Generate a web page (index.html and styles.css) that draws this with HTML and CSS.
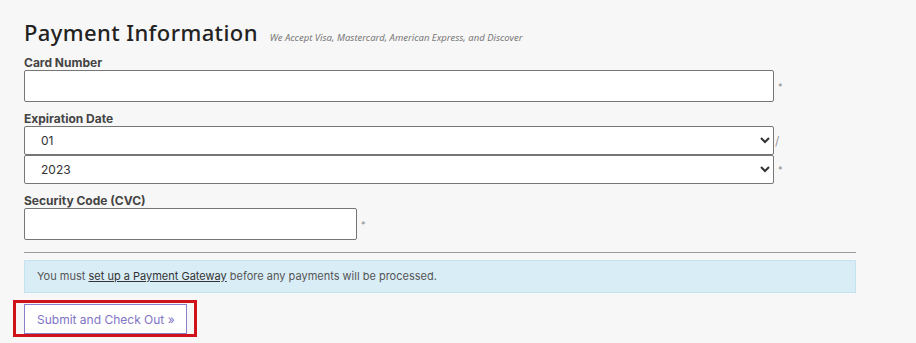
FILE: index.html
```html
<!DOCTYPE html>
<html lang="en">
<head>
    <meta charset="UTF-8">
    <title>Payment Information</title>
    <link rel="stylesheet" href="styles.css">
</head>
<body>
    <div class="checkout">
        <div class="title-row">
            <h2>Payment Information</h2>
            <span class="accepts">We Accept Visa, Mastercard, American Express, and Discover</span>
        </div>

        <div class="field">
            <label for="card-number">Card Number</label>
            <div class="row">
                <input type="text" id="card-number" class="input-wide">
                <span class="req">*</span>
            </div>
        </div>

        <div class="field">
            <label for="exp-month">Expiration Date</label>
            <div class="row">
                <select id="exp-month" class="select-wide">
                    <option>01</option>
                </select>
                <span class="slash">/</span>
            </div>
            <div class="row">
                <select id="exp-year" class="select-wide">
                    <option>2023</option>
                </select>
                <span class="req">*</span>
            </div>
        </div>

        <div class="field">
            <label for="cvc">Security Code (CVC)</label>
            <div class="row">
                <input type="text" id="cvc" class="input-short">
                <span class="req">*</span>
            </div>
        </div>

        <hr class="divider">

        <div class="alert">You must <a href="#">set up a Payment Gateway</a> before any payments will be processed.</div>

        <div class="submit-wrap">
            <button class="btn-submit">Submit and Check Out &raquo;</button>
        </div>
    </div>
</body>
</html>
```

FILE: styles.css
```css
body {
    margin: 0;
    background-color: #f7f7f7;
    font-family: Inter, "Liberation Sans", sans-serif;
    color: #333;
}
.checkout {
    width: 832px;
    padding: 18px 0 0 24px;
}
.title-row {
    display: flex;
    align-items: baseline;
    gap: 12px;
}
.title-row h2 {
    margin: 0;
    font-family: "Noto Sans", sans-serif;
    font-weight: 500;
    font-size: 22px;
    line-height: 28px;
    color: #222;
    letter-spacing: 0.4px;
}
.accepts {
    font-family: "Noto Sans", sans-serif;
    font-style: italic;
    font-size: 9.5px;
    color: #777;
}
.field {
    margin-top: 10px;
}
.field:first-of-type {
    margin-top: 8px;
}
.field label {
    display: block;
    font-size: 12px;
    font-weight: 700;
    line-height: 14px;
    color: #444;
}
.row {
    display: flex;
    align-items: center;
}
.input-wide, .input-short, .select-wide {
    box-sizing: border-box;
    border: 1px solid #767676;
    border-radius: 2px;
    background-color: white;
    font-family: Inter, "Liberation Sans", sans-serif;
    font-size: 12px;
    color: #333;
    margin: 0;
}
.input-wide {
    width: 750px;
    height: 32px;
}
.input-short {
    width: 333px;
    height: 32px;
}
.select-wide {
    width: 750px;
    height: 29px;
    padding-left: 12px;
}
.req {
    margin-left: 4px;
    font-size: 9px;
    color: #888;
}
.slash {
    margin-left: 1px;
    font-size: 12px;
    color: #999;
}
.divider {
    margin: 12px 0 0 0;
    border: none;
    border-top: 1px solid #999;
}
.alert {
    margin-top: 7px;
    padding: 8px 12px;
    background-color: #d9edf7;
    border: 1px solid #c4e3ee;
    font-size: 11px;
    line-height: 15px;
    color: #555;
}
.alert a {
    color: #333;
}
.submit-wrap {
    display: inline-block;
    margin: 7px 0 0 -11px;
    padding: 1px 7px 0 8px;
    border: 3px solid #d0121b;
}
.btn-submit {
    display: block;
    width: 163px;
    height: 30px;
    padding: 0 0 0 12px;
    white-space: nowrap;
    text-align: left;
    background-color: white;
    border: 1px solid #8a80c8;
    font-family: Inter, "Liberation Sans", sans-serif;
    font-size: 12px;
    color: #7f74c4;
    cursor: pointer;
}
```
